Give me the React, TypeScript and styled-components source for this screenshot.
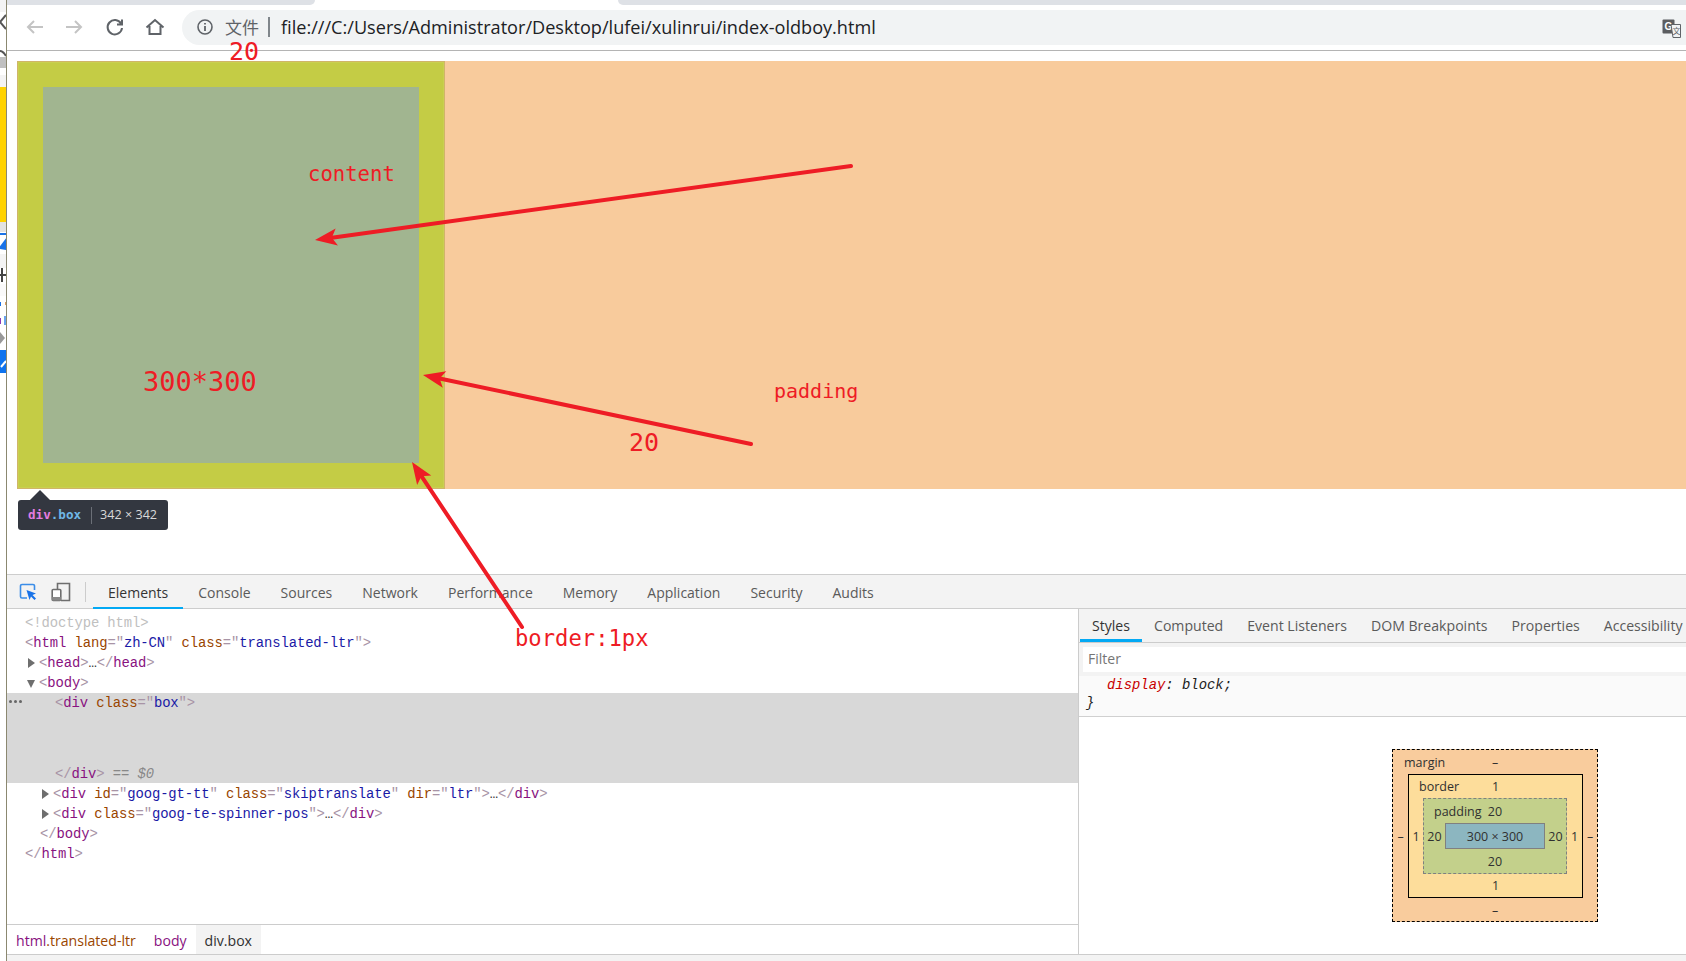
import React from "react";
import styled, { createGlobalStyle } from "styled-components";

const UI = `"Open Sans", "Noto Sans CJK SC", sans-serif`;
const MONO = `"Liberation Mono", monospace`;
const PIXEL = `"DejaVu Sans Mono", monospace`;

const Global = createGlobalStyle`
  html, body { margin: 0; padding: 0; background: #fff; overflow: hidden; }
  #root { width: 1686px; height: 961px; }
  * { box-sizing: border-box; }
`;

const Page = styled.div`
  position: relative; display: flex; width: 1686px; height: 961px; overflow: hidden; font-family: ${UI};
`;
const Sliver = styled.div`
  width: 7px; flex: none; display: flex; flex-direction: column; border-right: 1px solid #8b8870; overflow: hidden; background: #fff;
`;
const SliverBlock = styled.div<{ $h: number; $c: string }>`
  flex: none; height: ${p => p.$h}px; background: ${p => p.$c};
`;
const SliverIcon = styled.svg`
  display: block; flex: none; width: 6px;
`;
const Main = styled.div`
  flex: 1; min-width: 0; display: flex; flex-direction: column;
`;
const TabStrip = styled.div`
  height: 5px; display: flex; flex: none;
`;
const InactiveTab = styled.div<{ $w?: number; $side: "l" | "r" }>`
  background: #dee1e6;
  ${p => (p.$w ? `width:${p.$w}px;flex:none;` : "flex:1;")}
  ${p => (p.$side === "r" ? "border-bottom-right-radius:8px;" : "border-bottom-left-radius:8px;")}
`;
const ActiveTab = styled.div`
  width: 303px; flex: none;
`;
const Toolbar = styled.div`
  height: 46px; flex: none; display: flex; align-items: flex-start; padding: 5px 0 0 18px; border-bottom: 1px solid #b4b4b4; background: #fff;
`;
const NavButton = styled.span`
  width: 40px; height: 35px; flex: none; display: flex; align-items: center; justify-content: flex-start; padding-bottom: 2px;
`;
const Omnibox = styled.div`
  margin-left: -3px; flex: 1; height: 35px; display: flex; align-items: center; background: #f1f3f4; border-radius: 18px 0 0 18px; padding: 0 0 2px 15px; position: relative;
`;
const SecurityLabel = styled.span`
  font-size: 17px; color: #5f6368; margin-left: 12px; font-family: "Noto Sans CJK SC", sans-serif; line-height: 20px;
`;
const OmniDivider = styled.span`
  width: 2px; height: 20px; background: #80868b; margin: 0 11px 0 9px;
`;
const Url = styled.span`
  font-size: 18.13px; color: #202124; white-space: nowrap; letter-spacing: 0; font-family: ${UI}; line-height: 24px;
`;
const TranslateIcon = styled.svg`
  position: absolute; right: 4px; top: 9px;
`;
const Viewport = styled.div`
  height: 523px; flex: none; padding: 10px 0 0 10px; background: #fff;
`;
const HighlightRow = styled.div`
  display: flex; height: 428px;
`;
const BoxHighlight = styled.div`
  width: 428px; height: 428px; flex: none; padding: 25px; background: #c4cc45; border: 1px solid #d0b568; box-shadow: inset 0 0 0 1px #c9d050;
`;
const ContentHighlight = styled.div`
  width: 100%; height: 100%; background: #a1b590;
`;
const MarginHighlight = styled.div`
  flex: 1; background: #f8cb9c;
`;
const Tooltip = styled.div`
  position: relative; margin: 11px 0 0 1px; width: 150px; height: 30px; border-radius: 3px; background: #333740; display: flex; align-items: center; padding: 0 0 2px 10px; font-size: 12.4px;
  &::before {
    content: ""; position: absolute; left: 12px; top: -10px; width: 0; height: 0;
    border-left: 10px solid transparent; border-right: 10px solid transparent; border-bottom: 10px solid #333740;
  }
`;
const TipTag = styled.span`
  font-family: ${PIXEL}; font-size: 12.6px; font-weight: 700; color: #e37ce0;
`;
const TipClass = styled(TipTag)`
  color: #6fb7e6;
`;
const TipDivider = styled.span`
  width: 1px; height: 17px; background: #6b6f77; margin: 2px 8px 0 10px;
`;
const TipSize = styled.span`
  color: #d9d9d9; white-space: nowrap; font-size: 12.6px;
`;
const DevTools = styled.div`
  flex: 1; min-height: 0; display: flex; flex-direction: column; background: #fff;
`;
const MainTabs = styled.div`
  height: 35px; flex: none; display: flex; background: #f3f3f3; border-top: 1px solid #cdcdcd; border-bottom: 1px solid #cdcdcd; padding-left: 12px;
`;
const ToolIcon = styled.svg<{ $gap?: number }>`
  flex: none; align-self: center; margin-left: ${p => p.$gap ?? 0}px;
`;
const ToolSep = styled.span`
  width: 1px; height: 20px; background: #ccc; align-self: center; margin: 0 7px 0 14px; flex: none;
`;
const MainTab = styled.span<{ $on?: boolean }>`
  padding: 0 15px; height: 34px; display: flex; align-items: center; font-size: 14px; white-space: nowrap;
  color: ${p => (p.$on ? "#333" : "#5a5a5a")};
  box-shadow: ${p => (p.$on ? "inset 0 -2px 0 #03a9f4" : "none")};
`;
const Panels = styled.div`
  flex: 1; min-height: 0; display: flex;
`;
const ElementsPane = styled.div`
  width: 1072px; flex: none; display: flex; flex-direction: column; border-right: 1px solid #ccc;
`;
const Tree = styled.div`
  flex: 1; min-height: 0; padding-top: 3px; font-family: ${MONO}; font-size: 13.9px; letter-spacing: -0.1px;
`;
const Row = styled.div<{ $indent: number }>`
  height: 20px; line-height: 22px; white-space: pre; position: relative; padding-left: ${p => p.$indent}px;
`;
const Selected = styled.div`
  height: 90px; margin-top: 1px; background: #d8d8d8; display: flex; flex-direction: column; justify-content: space-between; position: relative;
`;
const SelectedRow = styled(Row)`
  margin-top: -1px;
  &:last-child { margin-top: 0; }
`;
const Dots = styled.span`
  position: absolute; left: 2px; top: 7px; display: flex; gap: 2px;
  & > i { width: 3px; height: 3px; border-radius: 50%; background: #666; display: block; }
`;
const Caret = styled.span<{ $open?: boolean }>`
  position: absolute; left: ${p => (p.$open ? "-12px" : "-11px")}; top: ${p => (p.$open ? "5px" : "3px")}; width: 0; height: 0;
  ${p => p.$open
    ? "border-left:4.5px solid transparent;border-right:4.5px solid transparent;border-top:8px solid #6e6e6e;"
    : "border-top:5px solid transparent;border-bottom:5px solid transparent;border-left:7px solid #6e6e6e;"}
`;
const Anchor = styled.span`
  position: relative;
`;
const Br = styled.span`color: #a894a6;`;
const Tag = styled.span`color: #881280;`;
const Attr = styled.span`color: #994500;`;
const Val = styled.span`color: #1a1aa6;`;
const Doctype = styled.span`color: #c0c0c0;`;
const Faint = styled.span`color: #888; font-style: italic;`;
const Ellip = styled.span`color: #333;`;
const Crumbs = styled.div`
  height: 30px; flex: none; display: flex; border-top: 1px solid #ccc; font-size: 14.1px; background: #fff;
`;
const Crumb = styled.span<{ $on?: boolean }>`
  display: flex; align-items: center; padding: 2px 9px 0; white-space: nowrap; color: ${p => (p.$on ? "#303030" : "#881280")};
  background: ${p => (p.$on ? "#f3f3f3" : "transparent")};
`;
const CrumbClass = styled.span`color: #994500;`;
const SidePane = styled.div`
  flex: 1; min-width: 0; display: flex; flex-direction: column;
`;
const SideTabs = styled.div`
  height: 34px; flex: none; display: flex; padding-left: 1px; background: #f3f3f3; border-bottom: 1px solid #ccc; overflow: hidden;
`;
const SideTab = styled.span<{ $on?: boolean }>`
  padding: 0 12px; height: 33px; display: flex; align-items: center; font-size: 14.1px; white-space: nowrap; flex: none;
  color: ${p => (p.$on ? "#333" : "#5a5a5a")};
  box-shadow: ${p => (p.$on ? "inset 0 -3px 0 #03a9f4" : "none")};
`;
const FilterBar = styled.div`
  height: 33px; flex: none; background: #f3f3f3; padding: 4px 0 4px 4px;
`;
const FilterInput = styled.div`
  height: 25px; background: #fff; padding-left: 5px; font-size: 14px; line-height: 24px; color: #757575;
`;
const RuleBlock = styled.div`
  height: 41px; flex: none; background: #fafafa; border-bottom: 1px solid #d0d0d0; font-family: ${MONO}; font-size: 13.9px; font-style: italic; color: #222; padding: 0 0 0 7px; line-height: 18px;
`;
const PropLine = styled.div`
  padding-left: 21px;
`;
const PropName = styled.span`color: #c80000;`;
const BoxWrap = styled.div`
  padding: 32px 0 0 313px; font-size: 12.5px; color: #303030;
`;
const Layer = styled.div<{ $c: string; $line: string; $w: number; $h: number; $top: number; $bottom: number; $left: number; $right: number }>`
  width: ${p => p.$w}px; height: ${p => p.$h}px; background: ${p => p.$c}; border: 1px ${p => p.$line};
  display: grid; grid-template-columns: ${p => p.$left}px 1fr ${p => p.$right}px; grid-template-rows: ${p => p.$top}px 1fr ${p => p.$bottom}px;
`;
const TopLine = styled.div`
  grid-column: 1 / -1; display: grid; grid-template-columns: 1fr auto 1fr; align-items: center;
`;
const BottomLine = styled.div`
  grid-column: 1 / -1; display: flex; align-items: center; justify-content: center;
`;
const LayerLabel = styled.span<{ $pad: number }>`
  padding-left: ${p => p.$pad}px;
`;
const Side = styled.span`
  display: flex; align-items: center; justify-content: center;
`;
const ContentBox = styled.div`
  width: 100px; height: 26px; background: #8cb6c0; border: 1px solid #808080; display: flex; align-items: center; justify-content: center; white-space: nowrap;
`;
const BottomStrip = styled.div`
  height: 7px; flex: none; background: #f3f3f3; border-top: 1px solid #ccc;
`;
const Overlay = styled.svg`
  position: absolute; left: 0; top: 0; pointer-events: none;
`;
const Note = styled.span<{ $x: number; $y: number; $s: number }>`
  position: absolute; left: ${p => p.$x}px; top: ${p => p.$y}px; font-family: ${PIXEL}; font-size: ${p => p.$s}px; line-height: 1; color: #ee1c25; white-space: nowrap;
`;

const Chevrons = () => (
  <SliverIcon height="45" viewBox="0 0 6 45">
    <path d="M6 3 L0 10 L6 17 M0 39 Q3 39 6 44" fill="none" stroke="#555" strokeWidth="2" />
  </SliverIcon>
);
const BlueMark = () => (
  <SliverIcon height="22" viewBox="0 0 6 22">
    <path d="M0 2 H6 M0 16 L6 8 L6 17 Z" fill="#1a73e8" stroke="#1a73e8" strokeWidth="2" />
  </SliverIcon>
);
const Plus = () => (
  <SliverIcon height="16" viewBox="0 0 6 16">
    <path d="M2 0 V14 M0 7 H6" fill="none" stroke="#444" strokeWidth="2" />
  </SliverIcon>
);
const TextBits = () => (
  <SliverIcon height="48" viewBox="0 0 6 48">
    <rect x="0" y="6" width="1" height="4" fill="#1a73e8" />
    <rect x="5" y="6" width="1" height="3" fill="#e0a060" />
    <rect x="0" y="22" width="1" height="6" fill="#8a3ab9" />
    <rect x="4" y="20" width="2" height="9" fill="#6aa5f0" />
    <path d="M0 36 L5 42 L0 48 Z" fill="#999" />
  </SliverIcon>
);
const CheckBlock = () => (
  <SliverIcon height="23" viewBox="0 0 6 23">
    <rect width="6" height="23" fill="#0f73ee" />
    <path d="M1 17 L6 11" stroke="#fff" strokeWidth="2" />
  </SliverIcon>
);

const Nav = ({ d, c }: { d: string; c: string }) => (
  <NavButton>
    <svg width="20" height="20" viewBox="0 0 20 20"><path d={d} fill="none" stroke={c} strokeWidth="2" /></svg>
  </NavButton>
);

const Translate = () => (
  <TranslateIcon width="20" height="20" viewBox="0 0 20 20">
    <rect x="0.5" y="0.5" width="12" height="14" rx="1" fill="#5b5d60" />
    <text x="6.5" y="11" fontSize="10" fontWeight="700" fill="#fff" textAnchor="middle" fontFamily="Liberation Sans, sans-serif">G</text>
    <path d="M9 5.5 H18.5 V18.5 H11 Z" fill="#f1f3f4" stroke="#5f6368" strokeWidth="1" />
    <text x="14.5" y="15" fontSize="8" fill="#5f6368" textAnchor="middle" fontFamily="Noto Sans CJK SC, sans-serif">文</text>
  </TranslateIcon>
);

const Arrow = ({ x1, y1, x2, y2 }: { x1: number; y1: number; x2: number; y2: number }) => {
  const a = Math.atan2(y2 - y1, x2 - x1);
  const len = 22, half = 8.5, notch = 17;
  const bx = x2 - Math.cos(a) * len, by = y2 - Math.sin(a) * len;
  const nx = x2 - Math.cos(a) * notch, ny = y2 - Math.sin(a) * notch;
  const px = -Math.sin(a) * half, py = Math.cos(a) * half;
  return (
    <g>
      <line x1={x1} y1={y1} x2={nx} y2={ny} stroke="#ee1c25" strokeWidth="4" strokeLinecap="round" />
      <polygon points={`${x2},${y2} ${bx + px},${by + py} ${nx},${ny} ${bx - px},${by - py}`} fill="#ee1c25" />
    </g>
  );
};

const mainTabs = ["Console", "Sources", "Network", "Performance", "Memory", "Application", "Security", "Audits"];
const sideTabs = ["Computed", "Event Listeners", "DOM Breakpoints", "Properties", "Accessibility"];

export default function App() {
  return (
    <Page>
      <Global />
      <Sliver>
        <SliverBlock $h={12} $c="#f4f4f4" />
        <Chevrons />
        <SliverBlock $h={11} $c="#c0c0c0" />
        <SliverBlock $h={7} $c="#fff" />
        <SliverBlock $h={12} $c="#f4f4f4" />
        <SliverBlock $h={135} $c="#ffd200" />
        <SliverBlock $h={10} $c="#e2e2e2" />
        <BlueMark />
        <SliverBlock $h={14} $c="#f4f4f4" />
        <Plus />
        <SliverBlock $h={12} $c="#fafafa" />
        <TextBits />
        <SliverBlock $h={6} $c="#fff" />
        <CheckBlock />
      </Sliver>
      <Main>
        <TabStrip>
          <InactiveTab $w={308} $side="r" />
          <ActiveTab />
          <InactiveTab $side="l" />
        </TabStrip>
        <Toolbar>
          <Nav c="#c4c4c4" d="M18 10 H3 M9 4 L3 10 L9 16" />
          <Nav c="#c4c4c4" d="M1 10 H16 M10 4 L16 10 L10 16" />
          <Nav c="#5f6368" d="M16 6.5 A7.2 7.2 0 1 0 17 11 M17 2.5 V7.5 H12" />
          <Nav c="#5f6368" d="M1.5 10.5 L10 3 L18.5 10.5 M4.5 9 V17 H15.5 V9" />
          <Omnibox>
            <svg width="16" height="16" viewBox="0 0 16 16">
              <circle cx="8" cy="8" r="7" fill="none" stroke="#5f6368" strokeWidth="1.6" />
              <path d="M8 7 V12 M8 4 V5.6" stroke="#5f6368" strokeWidth="1.8" />
            </svg>
            <SecurityLabel>文件</SecurityLabel>
            <OmniDivider />
            <Url>file:///C:/Users/Administrator/Desktop/lufei/xulinrui/index-oldboy.html</Url>
            <Translate />
          </Omnibox>
        </Toolbar>
        <Viewport>
          <HighlightRow>
            <BoxHighlight><ContentHighlight /></BoxHighlight>
            <MarginHighlight />
          </HighlightRow>
          <Tooltip>
            <TipTag>div</TipTag><TipClass>.box</TipClass>
            <TipDivider />
            <TipSize>342 × 342</TipSize>
          </Tooltip>
        </Viewport>
        <DevTools>
          <MainTabs>
            <ToolIcon width="18" height="18" viewBox="0 0 18 18">
              <path d="M8 15 H3 A1.5 1.5 0 0 1 1.5 13.5 V3 A1.5 1.5 0 0 1 3 1.5 H14 A1.5 1.5 0 0 1 15.5 3 V7" fill="none" stroke="#3b8de8" strokeWidth="1.6" />
              <path d="M7.5 7 L17 10.5 L13.5 12 L17 15.5 L15.5 17 L12 13.5 L10.5 17 Z" fill="#1a73e8" />
            </ToolIcon>
            <ToolIcon $gap={14} width="20" height="20" viewBox="0 0 20 20">
              <path d="M6.5 7 V1.5 H18.5 V18.5 H10" fill="none" stroke="#6e6e6e" strokeWidth="1.6" />
              <rect x="1.2" y="7.5" width="8.6" height="11" rx="1" fill="#fff" stroke="#6e6e6e" strokeWidth="1.6" />
              <rect x="1.2" y="15" width="8.6" height="3.5" fill="#8a8a8a" />
            </ToolIcon>
            <ToolSep />
            <MainTab $on>Elements</MainTab>
            {mainTabs.map(t => <MainTab key={t}>{t}</MainTab>)}
          </MainTabs>
          <Panels>
            <ElementsPane>
              <Tree>
                <Row $indent={18}><Doctype>&lt;!doctype html&gt;</Doctype></Row>
                <Row $indent={18}><Br>&lt;</Br><Tag>html</Tag> <Attr>lang</Attr><Br>="</Br><Val>zh-CN</Val><Br>"</Br> <Attr>class</Attr><Br>="</Br><Val>translated-ltr</Val><Br>"&gt;</Br></Row>
                <Row $indent={32}><Anchor><Caret /></Anchor><Br>&lt;</Br><Tag>head</Tag><Br>&gt;</Br><Ellip>…</Ellip><Br>&lt;/</Br><Tag>head</Tag><Br>&gt;</Br></Row>
                <Row $indent={32}><Anchor><Caret $open /></Anchor><Br>&lt;</Br><Tag>body</Tag><Br>&gt;</Br></Row>
                <Selected>
                  <Dots><i /><i /><i /></Dots>
                  <SelectedRow $indent={48}><Br>&lt;</Br><Tag>div</Tag> <Attr>class</Attr><Br>="</Br><Val>box</Val><Br>"&gt;</Br></SelectedRow>
                  <SelectedRow $indent={48}><Br>&lt;/</Br><Tag>div</Tag><Br>&gt;</Br> <Faint>== $0</Faint></SelectedRow>
                </Selected>
                <Row $indent={46}><Anchor><Caret /></Anchor><Br>&lt;</Br><Tag>div</Tag> <Attr>id</Attr><Br>="</Br><Val>goog-gt-tt</Val><Br>"</Br> <Attr>class</Attr><Br>="</Br><Val>skiptranslate</Val><Br>"</Br> <Attr>dir</Attr><Br>="</Br><Val>ltr</Val><Br>"&gt;</Br><Ellip>…</Ellip><Br>&lt;/</Br><Tag>div</Tag><Br>&gt;</Br></Row>
                <Row $indent={46}><Anchor><Caret /></Anchor><Br>&lt;</Br><Tag>div</Tag> <Attr>class</Attr><Br>="</Br><Val>goog-te-spinner-pos</Val><Br>"&gt;</Br><Ellip>…</Ellip><Br>&lt;/</Br><Tag>div</Tag><Br>&gt;</Br></Row>
                <Row $indent={33}><Br>&lt;/</Br><Tag>body</Tag><Br>&gt;</Br></Row>
                <Row $indent={18}><Br>&lt;/</Br><Tag>html</Tag><Br>&gt;</Br></Row>
              </Tree>
              <Crumbs>
                <Crumb>html<CrumbClass>.translated-ltr</CrumbClass></Crumb>
                <Crumb>body</Crumb>
                <Crumb $on>div.box</Crumb>
              </Crumbs>
            </ElementsPane>
            <SidePane>
              <SideTabs>
                <SideTab $on>Styles</SideTab>
                {sideTabs.map(t => <SideTab key={t}>{t}</SideTab>)}
              </SideTabs>
              <FilterBar><FilterInput>Filter</FilterInput></FilterBar>
              <RuleBlock>
                <PropLine><PropName>display</PropName>: block;</PropLine>
                <div>{"}"}</div>
              </RuleBlock>
              <BoxWrap>
                <Layer $c="#f9cc9d" $line="dashed #000" $w={206} $h={173} $top={24} $bottom={24} $left={15} $right={14}>
                  <TopLine><LayerLabel $pad={11}>margin</LayerLabel><span>–</span><span /></TopLine>
                  <Side>–</Side>
                  <Layer $c="#fddd9b" $line="solid #000" $w={175} $h={124} $top={23} $bottom={23} $left={14} $right={15}>
                    <TopLine><LayerLabel $pad={10}>border</LayerLabel><span>1</span><span /></TopLine>
                    <Side>1</Side>
                    <Layer $c="#c3d08b" $line="dashed #808080" $w={144} $h={76} $top={24} $bottom={24} $left={21} $right={21}>
                      <TopLine><LayerLabel $pad={10}>padding</LayerLabel><span>20</span><span /></TopLine>
                      <Side>20</Side>
                      <ContentBox>300 × 300</ContentBox>
                      <Side>20</Side>
                      <BottomLine>20</BottomLine>
                    </Layer>
                    <Side>1</Side>
                    <BottomLine>1</BottomLine>
                  </Layer>
                  <Side>–</Side>
                  <BottomLine>–</BottomLine>
                </Layer>
              </BoxWrap>
            </SidePane>
          </Panels>
          <BottomStrip />
        </DevTools>
      </Main>
      <Overlay width="1686" height="961" viewBox="0 0 1686 961">
        <Arrow x1={851} y1={166} x2={315} y2={240} />
        <Arrow x1={751} y1={444} x2={423} y2={375} />
        <Arrow x1={522} y1={627} x2={412} y2={462} />
      </Overlay>
      <Note $x={229} $y={39} $s={25}>20</Note>
      <Note $x={308} $y={164} $s={20.6}>content</Note>
      <Note $x={143} $y={368} $s={27}>300*300</Note>
      <Note $x={774} $y={381} $s={20}>padding</Note>
      <Note $x={629} $y={430} $s={25}>20</Note>
      <Note $x={515} $y={627} $s={22.2}>border:1px</Note>
    </Page>
  );
}
